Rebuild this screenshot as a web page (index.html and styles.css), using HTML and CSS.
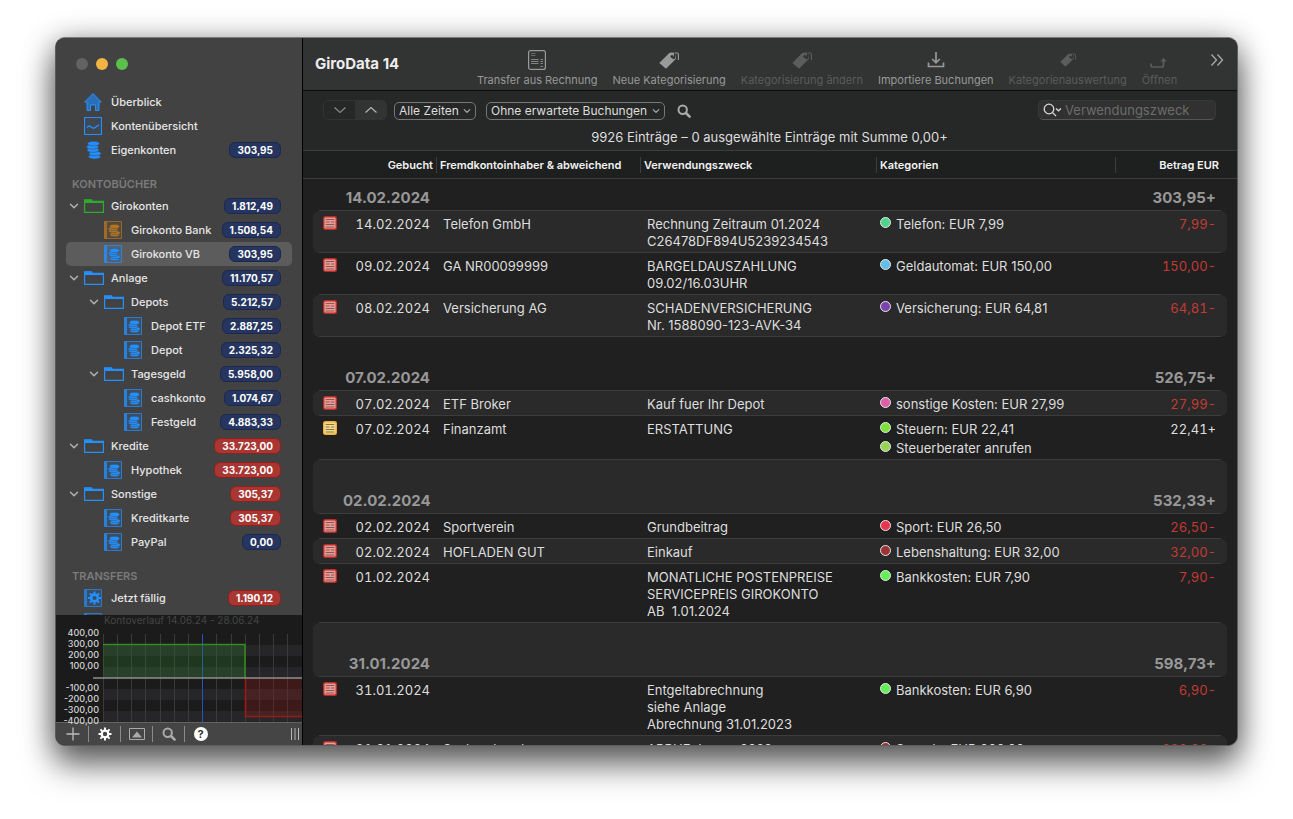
FILE: index.html
```
<!DOCTYPE html>
<html lang="de">
<head>
<meta charset="utf-8">
<title>GiroData 14</title>
<link rel="stylesheet" href="styles.css">
</head>
<body>
<svg class="sprite" aria-hidden="true">
  <symbol id="home" viewBox="0 0 18 18"><path d="M9 .5 17.3 9H15v8.500h-3.500v-5.500h-5v5.500H3V9H.7z" fill="#2c6fb9" stroke="#2490ff"/></symbol>
  <symbol id="overview" viewBox="0 0 18 18"><path d="M.5.500h17v17H.500z" fill="#3f4750" stroke="#2490ff" stroke-width="1.200"/><path d="M3 10.500c2-2.500 3-1.500 4.500-.2s2.500 1.200 4 0L15 7.800" fill="none" stroke="#2490ff" stroke-width="1.400"/></symbol>
  <symbol id="coins" viewBox="0 0 18 18"><g fill="#2490ff" stroke="#35506b" stroke-width=".6"><ellipse cx="10.500" cy="15.700" rx="6" ry="2.300"/><ellipse cx="11" cy="12.500" rx="6" ry="2.300"/><ellipse cx="9" cy="9" rx="6" ry="2.300"/><ellipse cx="8.500" cy="5.800" rx="6" ry="2.300"/><ellipse cx="9.500" cy="2.600" rx="6" ry="2.300"/></g></symbol>
  <symbol id="folder" viewBox="0 0 20 14"><path d="M.6 13.400V.8h6.800l1 1.500h11v11.100z" fill="none" stroke="currentColor" stroke-width="1.200"/><path d="M.6.800h6.800l1 1.500h11v1.700H.600z" fill="currentColor"/></symbol>
  <symbol id="book" viewBox="0 0 18 18"><path d="M.5.500h17v17H.500z" fill="currentColor" fill-opacity=".15" stroke="currentColor" stroke-opacity=".7"/><path d="M.5.500h2.600v17H.500z" fill="currentColor" opacity=".75"/><g fill="currentColor" stroke="#3f4c58" stroke-width=".5"><ellipse cx="10.700" cy="13.600" rx="4.700" ry="2.200"/><ellipse cx="11.300" cy="11.800" rx="4.900" ry="2"/><ellipse cx="9.300" cy="9.800" rx="4.800" ry="1.900"/><ellipse cx="9.200" cy="7.800" rx="4.800" ry="1.900"/><ellipse cx="10.500" cy="5.500" rx="4.900" ry="2.200"/></g></symbol>
  <symbol id="gearbook" viewBox="0 0 18 18"><path d="M.5.500h17v17H.500z" fill="#3a4d61" stroke="#2a79c8"/><path d="M.5.500h2.600v17H.500z" fill="#2a79c8"/><g stroke="#2490ff" fill="none"><circle cx="10.500" cy="9" r="3.400" stroke-width="2.600"/><path d="M10.500 2.500v3M10.500 12.500v3M4 9h3M14 9h3M5.900 4.400 8 6.500M13 11.500l2.100 2.100M5.900 13.600 8 11.500M13 6.500l2.100-2.100" stroke-width="2"/></g></symbol>
  <symbol id="down" viewBox="0 0 10 10"><path d="m1.500 3.200 3.500 3.600 3.500-3.600" fill="none" stroke="currentColor" stroke-width="1.500" stroke-linecap="round" stroke-linejoin="round"/></symbol>
  <symbol id="lens" viewBox="0 0 14 14"><circle cx="5.700" cy="5.700" r="4.200" fill="none" stroke="currentColor" stroke-width="2"/><path d="m9 9 3.600 3.600" stroke="currentColor" stroke-width="2.600" stroke-linecap="round"/></symbol>
  <symbol id="invoice" viewBox="0 0 20 22"><rect x="1.600" y="1.600" width="16.800" height="18.800" rx="2" fill="none" stroke="currentColor" stroke-width="1.200"/><path d="M4 4.500h4.500M4 6.500h4.500" stroke="currentColor" opacity=".5"/><path d="M4 10.500h7.500M4 12.500h7.500M4 14.500h7.500M13.500 10.500h2.500M13.500 12.500h2.500M13.500 14.500h2.500M13.500 17.500h2.500" stroke="currentColor" opacity=".8"/></symbol>
  <symbol id="tag" viewBox="0 0 20 17"><path d="M.3 11 10 1.300Q10.800.600 12 .600l4 .200q.900 0 1 1v4q0 1-.700 1.800L7 16.800z" fill="currentColor"/><circle cx="13" cy="4.600" r="1.500" fill="#323333"/><path d="M14 4.800c0 2.200 1.400 2.200 1.600 0L16 .800h2.500q1.200 0 1.200 1.400v6" fill="none" stroke="#323333" stroke-width="1.800"/><path d="M15.500 1h2.600q1.300 0 1.300 1.400v5.600" fill="none" stroke="currentColor" stroke-width="1.200"/></symbol>
  <symbol id="import" viewBox="0 0 18 18"><path d="M9 1v10M5.200 8 9 11.800 12.800 8M1.500 11.500v4h15v-4" fill="none" stroke="currentColor" stroke-width="1.700"/></symbol>
  <symbol id="open" viewBox="0 0 18 12"><path d="M1 6.500V8.500q0 1.500 1.500 1.500h9Q13.500 10 13.500 8V3" fill="none" stroke="currentColor" stroke-width="1.700"/><path d="M10.300 4.600 13.500.800l3.200 3.800z" fill="currentColor"/></symbol>
  <symbol id="note" viewBox="0 0 14 14"><rect x=".7" y=".7" width="12.600" height="12.600" rx="1.500" fill="var(--note-fill)" stroke="var(--note-line)" stroke-width="1.400"/><path d="M2.700 3.500h8.600M2.700 6h4M8 6h3.300M2.700 8.500h8.600M2.700 11h8.600" stroke="#4a3a30" stroke-opacity=".65"/></symbol>
</svg>

<div class="window">
  <aside class="sidebar">
    <div class="lights">
      <button class="light" aria-label="Schließen"></button>
      <button class="light light-min" aria-label="Minimieren"></button>
      <button class="light light-max" aria-label="Maximieren"></button>
    </div>
    <nav class="tree">
      <a class="item" href="#"><svg class="icon"><use href="#home"/></svg><span>Überblick</span></a>
      <a class="item" href="#"><svg class="icon"><use href="#overview"/></svg><span>Kontenübersicht</span></a>
      <a class="item" href="#"><svg class="icon"><use href="#coins"/></svg><span>Eigenkonten</span><b class="badge">303,95</b></a>
      <h2 class="group">KONTOBÜCHER</h2>
      <a class="item" href="#"><svg class="twist"><use href="#down"/></svg><svg class="icon folder green"><use href="#folder"/></svg><span>Girokonten</span><b class="badge">1.812,49</b></a>
      <a class="item level-1" href="#"><svg class="icon orange"><use href="#book"/></svg><span>Girokonto Bank</span><b class="badge">1.508,54</b></a>
      <a class="item level-1 selected" href="#"><svg class="icon"><use href="#book"/></svg><span>Girokonto VB</span><b class="badge">303,95</b></a>
      <a class="item" href="#"><svg class="twist"><use href="#down"/></svg><svg class="icon folder"><use href="#folder"/></svg><span>Anlage</span><b class="badge">11.170,57</b></a>
      <a class="item level-1" href="#"><svg class="twist"><use href="#down"/></svg><svg class="icon folder"><use href="#folder"/></svg><span>Depots</span><b class="badge">5.212,57</b></a>
      <a class="item level-2" href="#"><svg class="icon"><use href="#book"/></svg><span>Depot ETF</span><b class="badge">2.887,25</b></a>
      <a class="item level-2" href="#"><svg class="icon"><use href="#book"/></svg><span>Depot</span><b class="badge">2.325,32</b></a>
      <a class="item level-1" href="#"><svg class="twist"><use href="#down"/></svg><svg class="icon folder"><use href="#folder"/></svg><span>Tagesgeld</span><b class="badge">5.958,00</b></a>
      <a class="item level-2" href="#"><svg class="icon"><use href="#book"/></svg><span>cashkonto</span><b class="badge">1.074,67</b></a>
      <a class="item level-2" href="#"><svg class="icon"><use href="#book"/></svg><span>Festgeld</span><b class="badge">4.883,33</b></a>
      <a class="item" href="#"><svg class="twist"><use href="#down"/></svg><svg class="icon folder"><use href="#folder"/></svg><span>Kredite</span><b class="badge debt">33.723,00</b></a>
      <a class="item level-1" href="#"><svg class="icon"><use href="#book"/></svg><span>Hypothek</span><b class="badge debt">33.723,00</b></a>
      <a class="item" href="#"><svg class="twist"><use href="#down"/></svg><svg class="icon folder"><use href="#folder"/></svg><span>Sonstige</span><b class="badge debt">305,37</b></a>
      <a class="item level-1" href="#"><svg class="icon"><use href="#book"/></svg><span>Kreditkarte</span><b class="badge debt">305,37</b></a>
      <a class="item level-1" href="#"><svg class="icon"><use href="#book"/></svg><span>PayPal</span><b class="badge">0,00</b></a>
      <h2 class="group">TRANSFERS</h2>
      <a class="item" href="#"><svg class="icon"><use href="#gearbook"/></svg><span>Jetzt fällig</span><b class="badge debt">1.190,12</b></a>
      <a class="item" href="#"><svg class="icon"><use href="#gearbook"/></svg></a>
    </nav>
    <svg class="chart" viewBox="0 0 246 107" role="img">
      <path d="M47 30h199v11H47zM47 52h199v11H47zM47 74h199v11H47zM47 96h199v11H47z" fill="#262629"/>
      <path d="M47.500 19v88M61.500 19v88M75.500 19v88M89.500 19v88M104.500 19v88M118.500 19v88M132.500 19v88M160.500 19v88M175.500 19v88M189.500 19v88M203.500 19v88M217.500 19v88M231.500 19v88" stroke="#3a3a3a"/>
      <path d="M146.500 19v88" stroke="#1f56c4"/>
      <path d="M47 30h142v33H47z" fill="#2f7a2b" fill-opacity=".3"/>
      <path d="M189 63h57v38h-57z" fill="#8d1a18" fill-opacity=".3"/>
      <path d="M189.500 63v38.500H246" fill="none" stroke="#9a1b16" stroke-width="1.600"/>
      <path d="M47 29.500h142V63" fill="none" stroke="#358a20" stroke-width="1.600"/>
      <path d="M37 63h209" stroke="#8f8f8f" stroke-width="1.600"/>
      <text class="chart-title" x="48" y="9">Kontoverlauf 14.06.24 - 28.06.24</text>
      <g class="chart-axis">
        <text x="43" y="21">400,00</text><text x="43" y="32">300,00</text><text x="43" y="43">200,00</text><text x="43" y="54">100,00</text>
        <text x="43" y="76">-100,00</text><text x="43" y="87">-200,00</text><text x="43" y="98">-300,00</text><text x="43" y="109">-400,00</text>
      </g>
    </svg>
    <div class="bottombar">
      <button class="tool" aria-label="Hinzufügen"><svg width="14" height="14" viewBox="0 0 14 14"><path d="M7 .5v13M.5 7h13" stroke="#bdbdbd" stroke-width="1.300"/></svg></button>
      <button class="tool" aria-label="Aktionen"><svg width="14" height="14" viewBox="0 0 14 14"><g fill="none" stroke="#fff"><circle cx="7" cy="7" r="3.300" stroke-width="2.200"/><path d="M7 .500v3M7 10.500v3M.5 7h3M10.500 7h3M2.400 2.400l2.100 2.100M9.500 9.500l2.100 2.100M2.400 11.600l2.100-2.100M9.500 4.500l2.100-2.100" stroke-width="1.900"/></g></svg></button>
      <button class="tool" aria-label="Diagramm"><svg width="16" height="14" viewBox="0 0 16 14"><path d="M.5 1.500h15v11H.500z" fill="none" stroke="#aaa"/><path d="m3 10.500 5-6 5 6z" fill="#aaa"/></svg></button>
      <button class="tool" aria-label="Suchen"><svg width="14" height="14"><use href="#lens"/></svg></button>
      <button class="tool" aria-label="Hilfe"><span class="help">?</span></button>
      <svg class="grip" width="8" height="12" viewBox="0 0 8 12"><path d="M.5 0v12M4 0v12M7.500 0v12" stroke="#b5b5b5"/></svg>
    </div>
  </aside>

  <main class="main">
    <header class="toolbar">
      <h1 class="title">GiroData 14</h1>
      <button class="action"><span class="pic"><svg width="20" height="22"><use href="#invoice"/></svg></span>Transfer aus Rechnung</button>
      <button class="action"><span class="pic"><svg width="20" height="17"><use href="#tag"/></svg></span>Neue Kategorisierung</button>
      <button class="action" disabled><span class="pic"><svg width="20" height="17"><use href="#tag"/></svg></span>Kategorisierung ändern</button>
      <button class="action"><span class="pic"><svg width="18" height="18"><use href="#import"/></svg></span>Importiere Buchungen</button>
      <button class="action" disabled><span class="pic"><svg width="16" height="14"><use href="#tag"/></svg></span>Kategorienauswertung</button>
      <button class="action" disabled><span class="pic low"><svg width="18" height="12"><use href="#open"/></svg></span>Öffnen</button>
      <button class="more" aria-label="Mehr"><svg width="14" height="14" viewBox="0 0 14 14"><path d="m1.500 1.500 5 5.500-5 5.500M7.500 1.500l5 5.500-5 5.500" fill="none" stroke="#aaa" stroke-width="1.300"/></svg></button>
    </header>

    <section class="filters">
      <div class="filter-row">
        <div class="steps">
          <button class="step" aria-label="Nächste"><svg width="14" height="8" viewBox="0 0 14 8"><path d="m1.500 1.500 5.500 5 5.500-5" fill="none" stroke="#8a8a8a" stroke-width="1.200"/></svg></button>
          <button class="step step-on" aria-label="Vorherige"><svg width="14" height="8" viewBox="0 0 14 8"><path d="m1.500 6.500 5.500-5 5.500 5" fill="none" stroke="#b5b5b5" stroke-width="1.200"/></svg></button>
        </div>
        <div class="picker"><select aria-label="Zeitraum"><option>Alle Zeiten</option></select><svg><use href="#down"/></svg></div>
        <div class="picker"><select aria-label="Buchungen"><option>Ohne erwartete Buchungen</option></select><svg><use href="#down"/></svg></div>
        <button class="find" aria-label="Suchen"><svg width="14" height="14"><use href="#lens"/></svg></button>
        <label class="search">
          <svg width="19" height="14" viewBox="0 0 19 14"><g fill="none" stroke="#d8d8d8" stroke-width="1.300"><circle cx="6" cy="6" r="4.800"/><path d="m9.500 9.500 3.600 3.600M13 5.500l2.500 2.300L18 5.500"/></g></svg>
          <input type="search" placeholder="Verwendungszweck" aria-label="Verwendungszweck">
        </label>
      </div>
      <p class="summary">9926 Einträge – 0 ausgewählte Einträge mit Summe 0,00+</p>
    </section>

    <div class="ledger">
      <table>
        <colgroup><col class="c-icon"><col class="c-date"><col class="c-name"><col class="c-use"><col class="c-cat"><col class="c-sum"></colgroup>
        <thead>
          <tr><th colspan="2" class="right">Gebucht</th><th>Fremdkontoinhaber &amp; abweichend</th><th>Verwendungszweck</th><th>Kategorien</th><th class="right last">Betrag EUR</th></tr>
        </thead>
        <tbody>
          <tr class="day first"><td></td><td>14.02.2024</td><td></td><td></td><td></td><td>303,95+</td></tr>
          <tr><td><svg class="note"><use href="#note"/></svg></td><td>14.02.2024</td><td>Telefon GmbH</td><td>Rechnung Zeitraum 01.2024<br>C26478DF894U5239234543</td><td><div class="cat"><i class="dot mint"></i>Telefon: EUR 7,99</div></td><td class="minus">7,99-</td></tr>
          <tr><td><svg class="note"><use href="#note"/></svg></td><td>09.02.2024</td><td>GA NR00099999</td><td>BARGELDAUSZAHLUNG<br>09.02/16.03UHR</td><td><div class="cat"><i class="dot sky"></i>Geldautomat: EUR 150,00</div></td><td class="minus">150,00-</td></tr>
          <tr><td><svg class="note"><use href="#note"/></svg></td><td>08.02.2024</td><td>Versicherung AG</td><td>SCHADENVERSICHERUNG<br>Nr. 1588090-123-AVK-34</td><td><div class="cat"><i class="dot violet"></i>Versicherung: EUR 64,81</div></td><td class="minus">64,81-</td></tr>
          <tr class="day"><td></td><td>07.02.2024</td><td></td><td></td><td></td><td>526,75+</td></tr>
          <tr><td><svg class="note"><use href="#note"/></svg></td><td>07.02.2024</td><td>ETF Broker</td><td>Kauf fuer Ihr Depot</td><td><div class="cat"><i class="dot pink"></i>sonstige Kosten: EUR 27,99</div></td><td class="minus">27,99-</td></tr>
          <tr><td><svg class="note yellow"><use href="#note"/></svg></td><td>07.02.2024</td><td>Finanzamt</td><td>ERSTATTUNG</td><td><div class="cat"><i class="dot lime"></i>Steuern: EUR 22,41</div><div class="cat"><i class="dot olive"></i>Steuerberater anrufen</div></td><td>22,41+</td></tr>
          <tr class="day"><td></td><td>02.02.2024</td><td></td><td></td><td></td><td>532,33+</td></tr>
          <tr><td><svg class="note"><use href="#note"/></svg></td><td>02.02.2024</td><td>Sportverein</td><td>Grundbeitrag</td><td><div class="cat"><i class="dot red"></i>Sport: EUR 26,50</div></td><td class="minus">26,50-</td></tr>
          <tr><td><svg class="note"><use href="#note"/></svg></td><td>02.02.2024</td><td>HOFLADEN GUT</td><td>Einkauf</td><td><div class="cat"><i class="dot maroon"></i>Lebenshaltung: EUR 32,00</div></td><td class="minus">32,00-</td></tr>
          <tr><td><svg class="note"><use href="#note"/></svg></td><td>01.02.2024</td><td></td><td>MONATLICHE POSTENPREISE<br>SERVICEPREIS GIROKONTO<br>AB &nbsp;1.01.2024</td><td><div class="cat"><i class="dot green"></i>Bankkosten: EUR 7,90</div></td><td class="minus">7,90-</td></tr>
          <tr class="day"><td></td><td>31.01.2024</td><td></td><td></td><td></td><td>598,73+</td></tr>
          <tr><td><svg class="note"><use href="#note"/></svg></td><td>31.01.2024</td><td></td><td>Entgeltabrechnung<br>siehe Anlage<br>Abrechnung 31.01.2023</td><td><div class="cat"><i class="dot green"></i>Bankkosten: EUR 6,90</div></td><td class="minus">6,90-</td></tr>
          <tr><td><svg class="note"><use href="#note"/></svg></td><td>31.01.2024</td><td>Sachverband</td><td>ABBUE Januar 2023</td><td><div class="cat"><i class="dot maroon"></i>Spende: EUR 000,00</div></td><td class="minus">000,00-</td></tr>
        </tbody>
      </table>
    </div>
  </main>
</div>
</body>
</html>
```
FILE: styles.css
```
* { box-sizing: border-box; }

body {
  margin: 0;
  height: 100vh;
  padding: 37px 55px 73px;
  background: #fff;
  color: #dedede;
  font-family: Inter, "Liberation Sans", sans-serif;
  font-size: 13px;
  line-height: 17px;
  overflow: hidden;
}

button { border: 0; padding: 0; background: none; color: inherit; font: inherit; }
svg { display: block; flex: none; }
.sprite { position: absolute; width: 0; height: 0; }

.window {
  display: flex;
  height: 100%;
  border: 1px solid #5c5c5c;
  border-top-color: #7b7b7b;
  border-radius: 10px;
  overflow: hidden;
  background: #202020;
  box-shadow: 0 20px 32px rgba(0, 0, 0, .5), 0 4px 30px rgba(0, 0, 0, .4);
}

/* Sidebar */
.sidebar {
  display: flex;
  flex-direction: column;
  flex: none;
  width: 247px;
  border-right: 1px solid #000;
  background: #424242;
}
.lights { display: flex; gap: 8px; padding: 20px 20px 0; height: 52px; flex: none; }
.light { width: 12px; height: 12px; border-radius: 50%; background: #626262; }
.light-min { background: #f4b444; }
.light-max { background: #5bc04a; }

.tree { flex: 1; min-height: 0; overflow: hidden; padding: 0 10px; }
.item {
  display: flex;
  align-items: center;
  height: 24px;
  padding: 0 11px 0 18px;
  border-radius: 5px;
  color: #e6e6e6;
  font-size: 11px;
  font-weight: 500;
  text-decoration: none;
  white-space: nowrap;
}
.level-1 { padding-left: 38px; }
.level-2 { padding-left: 58px; }
.selected { background: #5c5c5c; }
.icon { width: 18px; height: 18px; margin-right: 9px; color: #2490ff; }
.folder { width: 20px; height: 14px; margin-right: 7px; }
.green { color: #2cab2c; }
.orange { color: #b87520; }
.twist { width: 10px; height: 10px; margin: 0 5px 0 -15px; color: #b0b0b0; }
.group { margin: 0; height: 32px; padding: 14px 6px 0; color: #7b7b7b; font-size: 11px; line-height: 17px; font-weight: 600; }
.badge {
  margin-left: auto;
  height: 16px;
  padding: 0 7px;
  border: 1px solid #1b2850;
  border-radius: 6px;
  background: #26355f;
  color: #fff;
  font-size: 10px;
  line-height: 14px;
  font-weight: 700;
}
.debt { background: #a83632; border-color: #8f201d; }

.chart { position: relative; z-index: 1; width: 100%; overflow: visible; background: #1b1b1b; }
.chart-title { fill: #454545; font-size: 10px; }
.chart-axis { fill: #d4d4d4; font-size: 9px; font-weight: 500; text-anchor: end; }

.bottombar {
  display: flex;
  align-items: center;
  flex: none;
  height: 23px;
  padding: 0 3px 0 1px;
  border-top: 1px solid #626262;
  background: #454545;
}
.tool { display: flex; align-items: center; justify-content: center; width: 32px; height: 16px; border-right: 1px solid #8a8a8a; color: #aaa; }
.tool:nth-child(5) { border-color: transparent; }
.help { width: 14px; height: 14px; border-radius: 50%; background: #fff; color: #333; font-size: 11px; line-height: 14px; font-weight: 700; }
.grip { margin-left: auto; }

/* Toolbar */
.main { display: flex; flex-direction: column; flex: 1; min-width: 0; }
.toolbar {
  display: flex;
  align-items: flex-start;
  flex: none;
  gap: 15px;
  height: 53px;
  padding: 10px 13px 0 12px;
  border-bottom: 1px solid #0c0c0c;
  background: #323333;
}
.title { flex: none; width: 147px; margin: 7px 0 0; color: #ececec; font-size: 15px; line-height: 18px; font-weight: 700; }
.action { display: flex; flex-direction: column; align-items: center; color: #989998; font-size: 11px; line-height: 17px; white-space: nowrap; }
.action:disabled { color: #5b5c5b; }
.pic { display: flex; align-items: center; justify-content: center; height: 24px; }
.low { align-items: flex-end; padding-bottom: 3px; }
.more { margin: 5px 0 0 auto; }

/* Filters */
.filters { flex: none; height: 59px; padding: 8px 21px 0 20px; background: #262727; }
.filter-row { display: flex; align-items: center; height: 22px; }
.steps { display: flex; height: 20px; margin-right: 7px; border: 1px solid #323333; border-radius: 5px; overflow: hidden; }
.step { display: flex; align-items: center; justify-content: center; width: 31px; }
.step-on { background: #323333; }
.picker { display: grid; align-items: center; margin: 2px 10px 0 0; }
.picker select {
  grid-area: 1 / 1;
  appearance: none;
  height: 18px;
  padding: 0 16px 0 4px;
  border: 1px solid #777;
  border-radius: 5px;
  background: transparent;
  color: #dedede;
  font: 12px/16px Inter, "Liberation Sans", sans-serif;
}
.picker svg { grid-area: 1 / 1; justify-self: end; width: 8px; height: 8px; margin-right: 5px; color: #aaa; pointer-events: none; }
.find { margin: 2px 0 0 2px; color: #aaa; }
.search {
  display: flex;
  align-items: center;
  gap: 3px;
  width: 178px;
  height: 20px;
  margin-left: auto;
  padding-left: 4px;
  border: 1px solid #363736;
  border-bottom-color: #545554;
  border-radius: 5px;
  background: #303130;
}
.search input { flex: 1; min-width: 0; padding: 0; border: 0; background: none; color: #dedede; font: inherit; }
.search input::placeholder { color: #6c6d6c; }
.summary { margin: 8px 0 0; text-align: center; }

/* Bookings */
.ledger {
  flex: 1;
  min-height: 0;
  padding: 0 10px;
  overflow: hidden;
  background: linear-gradient(#3c3d3c 1px, #1e201f 1px, #1e201f 28px, #3c3d3c 28px, #3c3d3c 29px, #202020 29px);
}
table { width: 100%; table-layout: fixed; border-collapse: separate; border-spacing: 0; }
.c-icon { width: 30px; }
.c-date { width: 94px; }
.c-name { width: 204px; }
.c-use { width: 236px; }
.c-sum { width: 111px; }
th {
  height: 30px;
  padding: 1px 4px 0 3px;
  background: linear-gradient(#3c3d3c, #3c3d3c) right 7px / 1px 16px no-repeat;
  color: #f2f2f2;
  font-size: 11px;
  font-weight: 600;
  text-align: left;
  white-space: nowrap;
}
th.right { text-align: right; }
th.last { padding-right: 8px; background: none; }

td {
  padding: 5px 0 3px 6px;
  background: linear-gradient(#3c3c3c, #3c3c3c) right bottom / 100% 1px no-repeat;
  vertical-align: top;
  white-space: nowrap;
}
tr:nth-child(even) td { background-color: #2a2a2a; }
td:first-child { padding-left: 10px; background-size: calc(100% - 6px) 1px; border-radius: 6px 0 0 6px; }
td:last-child { padding-right: 11px; background-size: calc(100% - 6px) 1px; background-position: left bottom; border-radius: 0 6px 6px 0; text-align: right; font-variant-numeric: tabular-nums; }
td:nth-child(2) { padding-left: 0; padding-right: 7px; text-align: right; font-variant-numeric: tabular-nums; }
td:nth-child(5) { padding-left: 3px; }
.day td { height: 54px; padding-bottom: 4px; color: #989898; font-size: 15px; line-height: 18px; font-weight: 700; vertical-align: bottom; }
.day td:nth-child(n) { font-variant-numeric: normal; }
.first td { height: 31px; }
.minus { color: #c23a33; }

.note { width: 14px; height: 14px; --note-fill: #ee9a98; --note-line: #b92c28; }
.yellow { --note-fill: #f5dc8a; --note-line: #f0ae35; }
.cat { display: flex; gap: 5px; }
.cat + .cat { margin-top: 2px; }
.dot { flex: none; width: 11px; height: 11px; margin-top: 1px; border: 1px solid #e8e8e8; border-radius: 50%; }
.mint { background: #4fd48a; }
.sky { background: #62bfe8; }
.violet { background: #7c43b0; }
.pink { background: #dd5fa8; }
.lime { background: #7ee03c; }
.olive { background: #98d454; }
.red { background: #e8354f; }
.maroon { background: #9c3434; }
.dot.green { background: #63ee58; }
```
